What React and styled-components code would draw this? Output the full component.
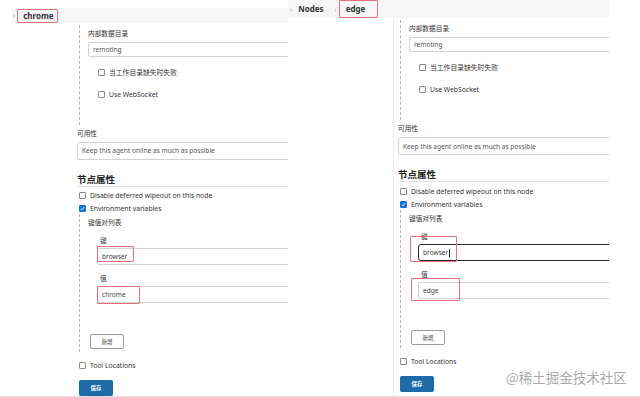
import React from "react";
import styled, { createGlobalStyle } from "styled-components";

const Global = createGlobalStyle`
  html, body { margin: 0; padding: 0; background: #fff; }
  body { font-family: "Noto Sans", "Noto Sans CJK SC", sans-serif; color: #333; }
`;

const Page = styled.div`
  position: relative;
  display: flex;
  width: 640px;
  height: 396px;
  border-bottom: 1px solid #dcdcdc;
  overflow: hidden;
  background: #fff;
`;

const Panel = styled.div`
  position: relative;
  flex: none;
  width: ${(p) => p.$w}px;
  height: 396px;
  overflow: hidden;
  display: flex;
  flex-direction: column;
`;

const Crumbs = styled.div`
  flex: none;
  display: flex;
  align-items: center;
  height: ${(p) => p.$h}px;
  margin: ${(p) => p.$m};
  width: ${(p) => p.$w}px;
  background: #f6f6f6;
  font-size: 8px;
  font-weight: 700;
  color: #333;
`;

const Chevron = styled.span`
  font-size: 7px;
  font-weight: 400;
  color: #aaa;
  margin: 0 ${(p) => p.$r}px 0 ${(p) => p.$l}px;
`;

const CrumbText = styled.span`
  line-height: 1;
`;

const CrumbMark = styled.span`
  display: flex;
  align-items: center;
  box-sizing: border-box;
  height: ${(p) => p.$h}px;
  width: ${(p) => p.$w}px;
  padding-left: ${(p) => p.$pl}px;
  border: 1px solid #e3707a;
  border-radius: 1px;
`;

const Main = styled.div`
  flex: 1;
  margin-left: ${(p) => p.$ml}px;
  margin-right: ${(p) => p.$mr}px;
  border-left: 1px solid ${(p) => p.$line};
  padding-left: ${(p) => p.$pl}px;
  overflow: hidden;
  display: flex;
  flex-direction: column;
  align-items: stretch;
`;

const Nested = styled.div`
  margin: ${(p) => p.$mt}px 0 0 2px;
  border-left: 1px dashed #b5b5b5;
  padding: 4px 0 ${(p) => p.$pb}px 8px;
  display: flex;
  flex-direction: column;
`;

const Label = styled.div`
  font-size: 6.7px;
  line-height: 10px;
  height: 10px;
  color: #333;
  margin-top: ${(p) => p.$mt || 0}px;
  margin-left: ${(p) => p.$ml || 0}px;
  white-space: nowrap;
`;

const Field = styled.div`
  position: relative;
  box-sizing: border-box;
  height: ${(p) => p.$h}px;
  margin-top: ${(p) => p.$mt}px;
  margin-right: -14px;
  border: ${(p) => (p.$focus ? "1.5px solid #2b2b2b" : "1px solid #d2d2d2")};
  border-radius: ${(p) => (p.$focus ? 3 : 2)}px;
  background: #fff;
  display: flex;
  align-items: center;
  padding-left: 4px;
  font-size: 6.6px;
  color: ${(p) => (p.$muted ? "#555" : "#444")};
  white-space: nowrap;
`;

const Caret = styled.span`
  display: inline-block;
  width: 1px;
  height: 8px;
  background: #222;
  margin-left: 0.5px;
`;

const Mark = styled.div`
  position: absolute;
  left: ${(p) => p.$x}px;
  top: ${(p) => p.$y}px;
  width: ${(p) => p.$w}px;
  height: ${(p) => p.$h}px;
  border: 1px solid #e3707a;
  border-radius: 1px;
  box-sizing: border-box;
  pointer-events: none;
`;

const CheckRow = styled.div`
  display: flex;
  align-items: center;
  height: 10px;
  margin-top: ${(p) => p.$mt}px;
  padding-left: ${(p) => p.$pl}px;
  font-size: 6.8px;
  color: #333;
  white-space: nowrap;
`;

const Box = styled.span`
  flex: none;
  box-sizing: border-box;
  width: 7px;
  height: 7px;
  border: 1px solid ${(p) => (p.$on ? "#1a6fd6" : "#8a8a8a")};
  border-radius: 1px;
  background: ${(p) => (p.$on ? "#1a6fd6" : "#fff")};
  margin-right: 4px;
  display: flex;
  align-items: center;
  justify-content: center;
`;

const Heading = styled.div`
  margin-top: ${(p) => p.$mt}px;
  margin-right: -14px;
  height: 13px;
  line-height: 13px;
  font-size: 9.5px;
  font-weight: 700;
  color: #222;
  border-bottom: 1px solid #e2e2e2;
`;

const Group = styled.div`
  display: flex;
  flex-direction: column;
  padding-left: 9px;
`;

const SmallBtn = styled.div`
  box-sizing: border-box;
  width: 34px;
  height: 15px;
  margin: ${(p) => p.$mt}px 0 0 2px;
  border: 1px solid #9a9a9a;
  border-radius: 2px;
  background: #fff;
  font-size: 5.5px;
  color: #333;
  display: flex;
  align-items: center;
  justify-content: center;
`;

const SaveBtn = styled.div`
  box-sizing: border-box;
  width: 34px;
  height: 16px;
  margin: ${(p) => p.$mt}px 0 0 2px;
  border-radius: 2px;
  background: #1c6aa6;
  font-size: 5.5px;
  font-weight: 700;
  color: #fff;
  display: flex;
  align-items: center;
  justify-content: center;
`;

const Watermark = styled.div`
  position: absolute;
  left: 506px;
  top: 367px;
  font-size: 13.5px;
  line-height: 20px;
  color: rgba(140, 140, 140, 0.75);
  font-family: "Noto Sans CJK SC", "Noto Sans", sans-serif;
  white-space: nowrap;
`;

const Check = ({ on }) => (
  <Box $on={on}>
    {on && (
      <svg width="5" height="5" viewBox="0 0 10 10">
        <path d="M1.5 5.2 L4 7.6 L8.6 2.4" fill="none" stroke="#fff" strokeWidth="1.8" />
      </svg>
    )}
  </Box>
);

function NodeForm({ value, keyMark, valMark, focusKey }) {
  return (
    <>
      <Nested $mt={2} $pb={26}>
        <Label>内部数据目录</Label>
        <Field $h={15} $mt={3} $muted>remoting</Field>
        <CheckRow $mt={10} $pl={10}>
          <Check />
          当工作目录缺失时失败
        </CheckRow>
        <CheckRow $mt={12} $pl={10}>
          <Check />
          Use WebSocket
        </CheckRow>
      </Nested>
      <Label $mt={4}>可用性</Label>
      <Field $h={18} $mt={3} $muted>
        Keep this agent online as much as possible
      </Field>
      <Heading $mt={13}>节点属性</Heading>
      <CheckRow $mt={4} $pl={2}>
        <Check />
        Disable deferred wipeout on this node
      </CheckRow>
      <CheckRow $mt={3} $pl={2}>
        <Check on />
        Environment variables
      </CheckRow>
      <Nested $mt={1} $pb={3}>
        <Label>键值对列表</Label>
        <Group>
          <Label $mt={8} $ml={3}>键</Label>
          <Field $h={17} $mt={2} $focus={focusKey}>
            browser{focusKey && <Caret />}
            <Mark $x={keyMark.x} $y={keyMark.y} $w={keyMark.w} $h={keyMark.h} />
          </Field>
          <Label $mt={9} $ml={3}>值</Label>
          <Field $h={17} $mt={2}>
            {value}
            <Mark $x={valMark.x} $y={valMark.y} $w={valMark.w} $h={valMark.h} />
          </Field>
        </Group>
        <SmallBtn $mt={31}>新增</SmallBtn>
      </Nested>
      <CheckRow $mt={8} $pl={2}>
        <Check />
        Tool Locations
      </CheckRow>
      <SaveBtn $mt={10}>保存</SaveBtn>
    </>
  );
}

export default function App() {
  return (
    <>
      <Global />
      <Page>
        <Panel $w={288}>
          <Crumbs $h={15} $m="8px 0 0 12px" $w={276}>
            <Chevron $l={1} $r={2}>›</Chevron>
            <CrumbMark $h={14} $w={41} $pl={5}>
              <CrumbText>chrome</CrumbText>
            </CrumbMark>
          </Crumbs>
          <Main $ml={0} $mr={0} $line="transparent" $pl={76}>
            <NodeForm
              value="chrome"
              keyMark={{ x: -1, y: -3, w: 37, h: 16 }}
              valMark={{ x: -1, y: -1, w: 43, h: 18 }}
            />
          </Main>
        </Panel>
        <Panel $w={352}>
          <Crumbs $h={18} $m="0" $w={321}>
            <Chevron $l={2} $r={6}>›</Chevron>
            <CrumbText>Nodes</CrumbText>
            <Chevron $l={11} $r={2}>›</Chevron>
            <CrumbMark $h={18} $w={39} $pl={6}>
              <CrumbText>edge</CrumbText>
            </CrumbMark>
          </Crumbs>
          <Main $ml={105} $mr={31} $line="#ececec" $pl={4}>
            <NodeForm
              value="edge"
              focusKey
              keyMark={{ x: -9, y: -9, w: 47, h: 26 }}
              valMark={{ x: -8, y: -5, w: 49, h: 23 }}
            />
          </Main>
        </Panel>
        <Watermark>@稀土掘金技术社区</Watermark>
      </Page>
    </>
  );
}
